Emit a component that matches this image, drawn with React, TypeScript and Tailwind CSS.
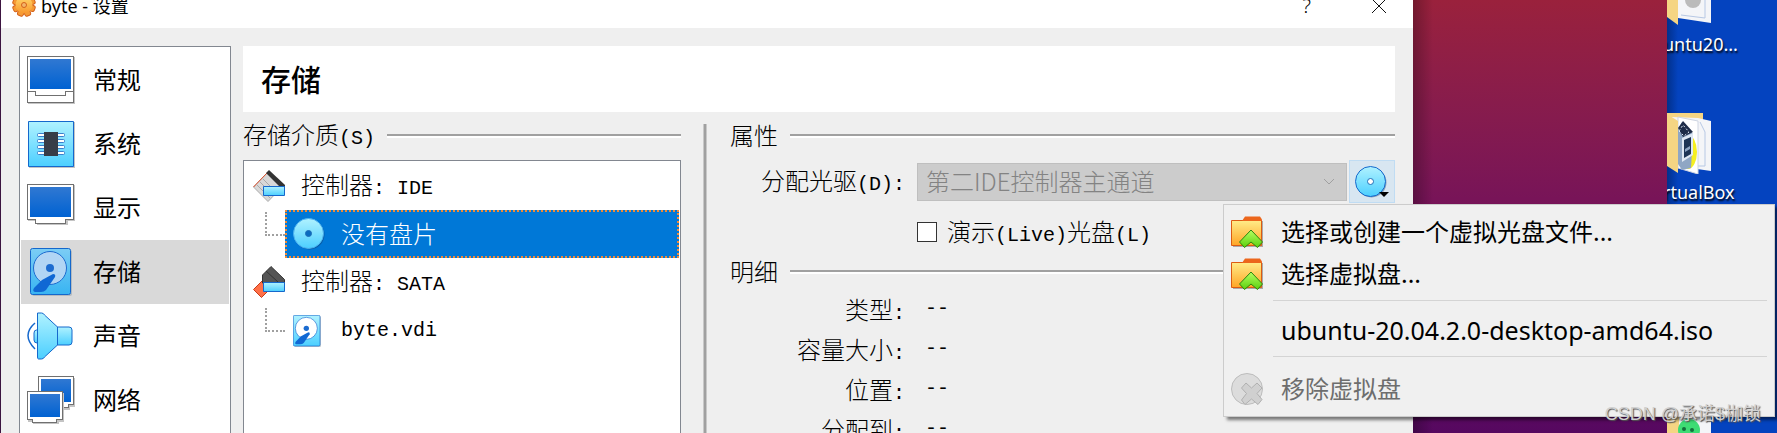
import type { ReactNode } from "react";

const teeth = [0, 45, 90, 135, 180, 225, 270, 315];

function GearIcon() {
  return (
    <svg viewBox="0 0 24 24" className="h-6 w-6 shrink-0">
      <defs>
        <linearGradient id="gear" x1="0" y1="0" x2="0" y2="1">
          <stop offset="0" stopColor="#ffd76a" />
          <stop offset="1" stopColor="#f8962c" />
        </linearGradient>
      </defs>
      {teeth.map((a) => (
        <rect key={a} x="9" y="0.5" width="6" height="8" rx="2" fill="#f59a34" stroke="#d4601a" transform={`rotate(${a + 22} 12 12)`} />
      ))}
      <circle cx="12" cy="12" r="8.500" fill="url(#gear)" />
      <circle cx="12" cy="12" r="2.500" fill="#f3b56a" stroke="#d4601a" />
    </svg>
  );
}

function MonitorIcon({ tray = false }) {
  return (
    <svg viewBox="0 0 48 48" className="h-12 w-12 shrink-0" shapeRendering="crispEdges">
      <defs>
        <linearGradient id="screen" x1="0" y1="0" x2="0" y2="1">
          <stop offset="0" stopColor="#3078d2" />
          <stop offset="1" stopColor="#0062d2" />
        </linearGradient>
      </defs>
      {tray ? (
        <>
          <path d="M1 1h47v47H1z" fill="#c4c4c4" />
          <path d="M.5 .5h46v46H.5z" fill="#fff" stroke="#707070" />
          <path d="M.5 35.500h8v4h30v-4h8" fill="none" stroke="#707070" />
        </>
      ) : (
        <>
          <path d="M1 1h47v36h-7v4H10v-4H1z" fill="#c4c4c4" />
          <path d="M.5 .5h46v35h-8v4h-30v-4h-8z" fill="#fff" stroke="#707070" />
        </>
      )}
      <path d="M3 3h41v30H3z" fill="url(#screen)" />
    </svg>
  );
}

function ChipIcon() {
  return (
    <svg viewBox="0 0 48 48" className="h-12 w-12 shrink-0">
      <defs>
        <linearGradient id="aqua" x1="0" y1="0" x2="0" y2="1">
          <stop offset="0" stopColor="#b0f2ff" />
          <stop offset="1" stopColor="#4ccfff" />
        </linearGradient>
      </defs>
      <path d="M2 2h46v46H2z" fill="#c4c4c4" />
      <path d="M1.500 1.500h45v45h-45z" fill="url(#aqua)" stroke="#1568cc" />
      {[13.5, 19.5, 25.5, 31.5].map((y) => (
        <rect key={y} x="10.500" y={y} width="27" height="3" rx="1" fill="#fff" stroke="#3a80cc" />
      ))}
      <path d="M17 12h14v24H17z" fill="#373d48" />
    </svg>
  );
}

function DiskIcon({ small = false }) {
  const plate = small ? "#ffffff" : "#b1d5f4";
  return (
    <svg viewBox="4 0 42 48" className={small ? "h-8 w-7 shrink-0" : "mx-[3px] h-12 w-[42px] shrink-0"}>
      <defs>
        <linearGradient id="disk" x1="0" y1="0" x2="0" y2="1">
          <stop offset="0" stopColor="#7ccdf5" />
          <stop offset="1" stopColor="#38b4f2" />
        </linearGradient>
      </defs>
      <rect x="6" y="2" width="40" height="46" rx="2" fill="#9aa5ad" opacity=".6" />
      <rect x="4.500" y=".5" width="40" height="46" rx="2" fill={small ? "url(#aqua)" : "url(#disk)"} stroke="#1568cc" />
      <circle cx="24" cy="20" r="16.500" fill={plate} stroke="#1c6cd0" />
      <circle cx="24" cy="20" r="4" fill="#1c6cd0" />
      <path d="M8 40l8-8 11-6q3 0 2 3l-9 13q-2 2-5 2h-6q-3-1-1-4z" fill="#1068d4" />
    </svg>
  );
}

function SpeakerIcon() {
  return (
    <svg viewBox="0 0 48 48" className="h-12 w-12 shrink-0">
      <g stroke="#1568cc" fill="url(#aqua)">
        <path d="M12 18H9.500Q7 18 7 21v7q0 3 3 3h2z" />
        <path d="M30 15h12q3 0 3 3v12q0 3-3 3H30z" />
        <path d="M10.500 1h4q2 0 3 2l13 12v18l-13 12q-1 2-3 2h-3q-1 0-1-2z" />
      </g>
      <path d="M8 11Q-6 23 8 37" fill="none" stroke="#1568cc" strokeWidth="1.500" />
    </svg>
  );
}

function NetworkIcon() {
  return (
    <svg viewBox="0 0 48 48" className="h-12 w-12 shrink-0" shapeRendering="crispEdges">
      <path d="M12 2h36v29h-5v3H12z" fill="#c4c4c4" />
      <path d="M11.500 .5h35v28h-5v3h-30z" fill="#fff" stroke="#707070" />
      <path d="M14 3h30v23H14z" fill="url(#screen)" />
      <path d="M1 17h36v29h-5v3H6v-3H1z" fill="#c4c4c4" />
      <path d="M.5 15.500h35v28h-6v3h-24v-3h-5z" fill="#fff" stroke="#707070" />
      <path d="M3 18h30v23H3z" fill="url(#screen)" />
    </svg>
  );
}

function ControllerIcon({ sata = false }) {
  return (
    <svg viewBox="0 0 32 32" className="h-8 w-8 shrink-0">
      {sata ? (
        <>
          <path d="M9 15L.5 23.500l8 8 8-8z" fill="#ff7048" stroke="#c83c18" />
          <path d="M18 .5L9.500 9v8h22v-3.500z" fill="#555" stroke="#333" />
          <path d="M13 5l12 11" stroke="#333" />
        </>
      ) : (
        <>
          <path d="M14 3L.5 17 15 31.500 29 17z" fill="#d8d8d8" stroke="#aaa" />
          <path d="M4 15l13 13M7 12l13 13M10 9l10 10" stroke="#aaa" />
          <path d="M14 3L.5 17" stroke="#e0502c" />
          <path d="M16 0l-3 3 15 15h4v-3z" fill="#333" />
        </>
      )}
      <path d="M10.500 16.500h21v9h-21z" fill="url(#aqua)" stroke="#1568cc" />
    </svg>
  );
}

function DiscIcon({ selected = false }) {
  return (
    <svg viewBox="0 0 32 32" className="h-8 w-8 shrink-0">
      <circle cx="16.500" cy="16.500" r="15" fill="#123a66" opacity=".4" />
      <circle cx="15.500" cy="15.500" r="15" fill="url(#aqua)" stroke={selected ? "#4cb0ee" : "#1568cc"} />
      <circle cx="15.500" cy="15.500" r="3" fill={selected ? "#0a6cc0" : "#fff"} stroke="#1f6fb8" />
    </svg>
  );
}

function FolderIcon() {
  return (
    <svg viewBox="0 0 32 32" className="h-8 w-8 shrink-0">
      <defs>
        <linearGradient id="folder" x1="0" y1="0" x2="0" y2="1">
          <stop offset="0" stopColor="#ffec88" />
          <stop offset="1" stopColor="#ffa526" />
        </linearGradient>
        <linearGradient id="arrow" x1="0" y1="0" x2="0" y2="1">
          <stop offset="0" stopColor="#b4ff60" />
          <stop offset="1" stopColor="#5cd010" />
        </linearGradient>
      </defs>
      <path d="M2 5h30v26H2z" fill="#aaa" />
      <path d="M.5 4.500h30v25H.5z" fill="url(#folder)" stroke="#dc5c12" />
      <path d="M11 5l3-4.500h15l2 3V5z" fill="#ec661c" />
      <path d="M20 14L8.500 26l5 5.500L20 26l6.500 5.500 5-5.500z" fill="url(#arrow)" stroke="#2c8410" />
    </svg>
  );
}

function RemoveIcon() {
  return (
    <svg viewBox="0 0 32 32" className="h-8 w-8 shrink-0">
      <circle cx="16" cy="16" r="15.500" fill="#dcdcdc" stroke="#bcbcbc" />
      <path d="M15 10l5.500 5 5.500-5 5 5-5 5.500 5 6-4 5-6.500-5.500L14 31.500 10.500 27l5-6.500-5-5.500z" fill="#d0d0d0" stroke="#b0b0b0" />
    </svg>
  );
}

const Mono = ({ children }: { children: ReactNode }) => (
  <span className="font-['Liberation_Mono',monospace] text-xl leading-none">{children}</span>
);

function GroupTitle({ children }: { children: ReactNode }) {
  return (
    <div className="flex h-6 items-center gap-3">
      <h2 className="shrink-0 pb-0.5">{children}</h2>
      <div className="h-1 flex-1 border-b-2 border-white bg-[#a0a0a0]" />
    </div>
  );
}

const pages = [
  { name: "常规", icon: <MonitorIcon tray /> },
  { name: "系统", icon: <ChipIcon /> },
  { name: "显示", icon: <MonitorIcon /> },
  { name: "存储", icon: <DiskIcon /> },
  { name: "声音", icon: <SpeakerIcon /> },
  { name: "网络", icon: <NetworkIcon /> },
];

const details = ["类型", "容量大小", "位置", "分配到"];

function Sidebar() {
  return (
    <nav className="w-[212px] shrink-0 border border-[#828790] bg-white p-px font-normal">
      {pages.map((page) => (
        <button
          key={page.name}
          className={`flex h-16 w-full items-center gap-[18px] pl-1.5 text-2xl leading-none ${page.name === "存储" ? "bg-[#d9d9d9]" : ""}`}
        >
          {page.icon}
          <span className="pb-0.5">{page.name}</span>
        </button>
      ))}
    </nav>
  );
}

function Branch() {
  return <div className="mb-5 ml-[21px] h-6 w-5 shrink-0 border-b-2 border-l-2 border-dotted border-[#a0a0a0]" />;
}

function StorageTree() {
  return (
    <section className="flex w-[438px] shrink-0 flex-col">
      <GroupTitle>
        存储介质<Mono>(S)</Mono>
      </GroupTitle>
      <ul className="mt-3 flex-1 border border-[#828790] bg-white pt-px">
        <li className="flex h-12 items-center gap-4 pl-[9px]">
          <ControllerIcon />
          <span className="pb-0.5">控制器<Mono>: IDE</Mono></span>
        </li>
        <li className="flex h-12 items-center pr-px">
          <Branch />
          <div className="flex h-12 flex-1 items-center gap-4 border-2 border-dotted border-[#f08a38] bg-[#0078d7] pl-[6px] text-white">
            <DiscIcon selected />
            <span className="pb-0.5">没有盘片</span>
          </div>
        </li>
        <li className="flex h-12 items-center gap-4 pl-[9px]">
          <ControllerIcon sata />
          <span className="pb-0.5">控制器<Mono>: SATA</Mono></span>
        </li>
        <li className="flex h-12 items-center pr-px">
          <Branch />
          <div className="flex flex-1 items-center gap-5 pt-0.5 pl-2">
            <DiskIcon small />
            <Mono>byte.vdi</Mono>
          </div>
        </li>
      </ul>
    </section>
  );
}

function DiskMenu() {
  return (
    <div
      role="menu"
      className="absolute top-full right-[-380px] z-20 mt-px w-[552px] border border-[#ccc] bg-[#f0f0f0] py-1.5 pr-[7px] pl-[7px] text-2xl leading-none font-normal shadow-[4px_3px_3px_rgba(0,0,0,0.5)]"
    >
      <button role="menuitem" className="flex h-[42px] w-full items-center gap-[18px]">
        <FolderIcon />
        <span className="pb-0.5">选择或创建一个虚拟光盘文件...</span>
      </button>
      <button role="menuitem" className="flex h-[42px] w-full items-center gap-[18px]">
        <FolderIcon />
        <span className="pb-0.5">选择虚拟盘...</span>
      </button>
      <hr className="mt-[5px] ml-[42px] border-[#d4d4d4]" />
      <button role="menuitem" className="flex h-[55px] w-full items-center pt-1 pl-[50px] font-['Noto_Sans',sans-serif] text-[25px]">
        ubuntu-20.04.2.0-desktop-amd64.iso
      </button>
      <hr className="mb-[11px] ml-[42px] border-[#d4d4d4]" />
      <button role="menuitem" disabled className="flex h-[42px] w-full items-center gap-[18px] text-[#6d6d6d]">
        <RemoveIcon />
        <span className="pb-0.5">移除虚拟盘</span>
      </button>
    </div>
  );
}

function Attributes() {
  return (
    <section className="min-w-0 flex-1">
      <GroupTitle>属性</GroupTitle>
      <div className="mt-3 flex items-center">
        <label htmlFor="drive" className="w-[187px] shrink-0 pr-3 text-right">
          分配光驱<Mono>(D):</Mono>
        </label>
        <div className="relative flex flex-1 items-center">
          <select
            id="drive"
            disabled
            className="h-[38px] w-full appearance-none border border-[#bfbfbf] bg-[#ccc] pb-0.5 pl-2 text-[#838383]"
          >
            <option>第二IDE控制器主通道</option>
          </select>
          <svg viewBox="0 0 12 8" className="absolute right-3 h-2 w-3" fill="none" stroke="#a0a0a0">
            <path d="M1 1l5 5 5-5" />
          </svg>
        </div>
        <div className="relative ml-0.5 shrink-0">
          <button
            aria-label="选择虚拟光盘"
            className="flex h-[43px] w-[46px] items-center justify-start border border-[#c0dcf3] bg-[#d8e6f1] pl-[5px]"
          >
            <DiscIcon />
            <svg viewBox="0 0 10 5" className="absolute right-1.5 bottom-1.5 h-[5px] w-[10px]">
              <path d="M0 0h10L5 5z" />
            </svg>
          </button>
          <DiskMenu />
        </div>
      </div>
      <div className="mt-[15px] ml-[187px] flex h-7 items-center gap-2.5">
        <input id="live" type="checkbox" className="h-5 w-5 appearance-none border border-[#333] bg-white" />
        <label htmlFor="live">
          演示<Mono>(Live)</Mono>光盘<Mono>(L)</Mono>
        </label>
      </div>
      <div className="mt-3.5">
        <GroupTitle>明细</GroupTitle>
      </div>
      <dl className="mt-1.5">
        {details.map((name) => (
          <div key={name} className="flex h-10 items-center">
            <dt className="w-[187px] pr-3 text-right">
              {name}<Mono>:</Mono>
            </dt>
            <dd className="flex pb-0.5 pl-2"><Mono>--</Mono></dd>
          </div>
        ))}
      </dl>
    </section>
  );
}

function Desktop() {
  return (
    <aside className="flex w-[364px] shrink-0 font-['Noto_Sans',sans-serif] text-lg font-normal text-white">
      <div className="w-[254px] shrink-0 bg-linear-to-b from-[#9a213c] via-[#75125a] to-[#560860]">
        <div className="h-full w-5 bg-linear-to-r from-black/25 to-transparent" />
      </div>
      <div className="flex flex-1 flex-col overflow-hidden bg-linear-to-r from-[#02308c] via-[#0443bf] via-10% to-[#0443bf]">
        <svg viewBox="0 0 44 26" className="h-[26px] w-11 shrink-0">
          <path d="M0 0h44v23L11 18z" fill="#f4f5f8" />
          <path d="M14 15l24 3V0" fill="none" stroke="#b7c8e4" />
          <circle cx="26" cy="0" r="8" fill="#bbb" />
          <path d="M0 0h11v25L0 17z" fill="#f5d583" />
        </svg>
        <p className="-ml-1 h-[86px] shrink-0 pt-1 text-shadow-[1px_2px_2px_#000]">untu20...</p>
        <svg viewBox="0 0 44 62" className="h-[62px] w-11 shrink-0">
          <path d="M0 1h36v10H0z" fill="#f5d583" />
          <path d="M4 5l27 1 13 3v50l-14-2z" fill="#f4f5f8" />
          <path d="M33 10l5 10v34h-7" fill="none" stroke="#b7c8e4" />
          <path d="M31 9v53l-20-6V5z" fill="#fff" stroke="#cfd6e2" />
          <ellipse cx="21" cy="40" rx="9" ry="17" fill="#f5ef20" />
          <path d="M11 18l4-8 11 12-2 34-9 2-4-6z" fill="#8fa6c4" />
          <path d="M11 16l5-7 10 11-10 5z" fill="#1e2c48" />
          <path d="M12 19l4-6 6 7-5 4z" fill="none" stroke="#dfe7f2" strokeDasharray="2 2" />
          <path d="M15 26l11-5v22l-11 7z" fill="#dfe8f4" />
          <path d="M17 28l7-3v17l-7 4z" fill="#1e3556" />
          <path d="M18 37l5-3v3l-5 3z" fill="#8fa6c4" />
          <path d="M0 2l11 7v52L0 54z" fill="#f5d583" />
        </svg>
        <p className="-ml-1 h-[42px] shrink-0 pt-1 text-shadow-[1px_2px_2px_#000]">rtualBox</p>
        <svg viewBox="0 0 44 30" className="mt-[200px] h-[30px] w-11 shrink-0">
          <path d="M0 0h44v30H0z" fill="#f4f5f8" />
          <path d="M0 0h12v30H0z" fill="#f5d583" />
          <circle cx="22" cy="14" r="11" fill="#3ddc74" />
          <circle cx="17" cy="13" r="2" fill="#12703c" />
          <circle cx="25" cy="14" r="2" fill="#12703c" />
        </svg>
      </div>
    </aside>
  );
}

export default function App() {
  return (
    <div className="relative flex h-screen overflow-hidden bg-[#efefef] font-['Noto_Sans_CJK_SC',sans-serif] text-2xl leading-none font-light text-black">
      <main className="relative z-10 flex min-w-0 flex-1 flex-col border-l border-[#3c1440]">
        <header className="flex h-7 shrink-0 items-start bg-white pl-[11px] font-['Noto_Sans','Noto_Sans_CJK_SC',sans-serif] text-lg leading-none font-normal">
          <div className="-mt-2 flex flex-1 items-center gap-[5px]">
            <GearIcon />
            <h1 className="pt-0.5 leading-6">byte - 设置</h1>
          </div>
          <button aria-label="帮助" className="-mt-1 mr-[60px] text-xl leading-none font-light">?</button>
          <button aria-label="关闭" className="-mt-0.5 mr-[26px]">
            <svg viewBox="0 0 16 16" className="h-4 w-4" stroke="#111">
              <path d="M1 1l14 14M15 1L1 15" />
            </svg>
          </button>
        </header>
        <div className="flex flex-1 gap-3 pt-[18px] pr-[18px] pl-[18px]">
          <Sidebar />
          <div className="flex min-w-0 flex-1 flex-col">
            <h2 className="flex h-[66px] shrink-0 items-center bg-white pb-0.5 pl-[18px] text-3xl leading-none font-medium">存储</h2>
            <div className="mt-3 flex flex-1">
              <StorageTree />
              <div className="mr-[23px] ml-[22px] w-1 shrink-0 border-x border-[#c8c8c8] bg-[#a0a0a0]" />
              <Attributes />
            </div>
          </div>
        </div>
      </main>
      <Desktop />
      <p className="absolute right-4 bottom-2.5 z-30 font-['Liberation_Sans','Noto_Sans_CJK_SC',sans-serif] text-lg leading-none font-normal text-[#d0d0d0] text-shadow-[1px_1px_1px_#555]">
        CSDN @承诺$枷锁
      </p>
    </div>
  );
}
